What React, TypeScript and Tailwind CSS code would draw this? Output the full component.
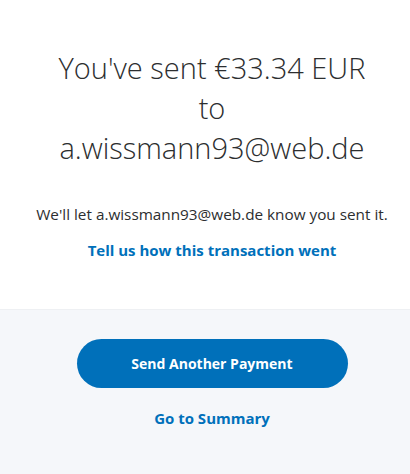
import React from "react";

export default function App() {
  return (
    <div className="w-[410px] h-[474px] flex flex-col bg-white" style={{ fontFamily: '"Open Sans", "Noto Sans", sans-serif' }}>
      <div className="h-[309px] flex flex-col items-center pt-[48px] pl-[14px] text-center text-[#2c2e2f]">
        <h1 className="text-[29px] leading-[40px] font-light">
          You've sent €33.34 EUR
          <br />
          to
          <br />
          a.wissmann93@web.de
        </h1>
        <p className="mt-[36px] text-[15.3px] leading-[20px] whitespace-nowrap">We'll let a.wissmann93@web.de know you sent it.</p>
        <a className="mt-[16px] text-[15px] leading-[20px] font-bold text-[#0070ba]">Tell us how this transaction went</a>
      </div>
      <div className="flex-1 bg-[#f5f7fa] border-t border-[#eef0f3] flex flex-col items-center pt-[29px] pl-[14px]">
        <button className="w-[271px] h-[49px] rounded-full bg-[#0070ba] text-white text-[14px] font-bold">Send Another Payment</button>
        <a className="mt-[20px] text-[15px] leading-[20px] font-bold text-[#0070ba]">Go to Summary</a>
      </div>
    </div>
  );
}
